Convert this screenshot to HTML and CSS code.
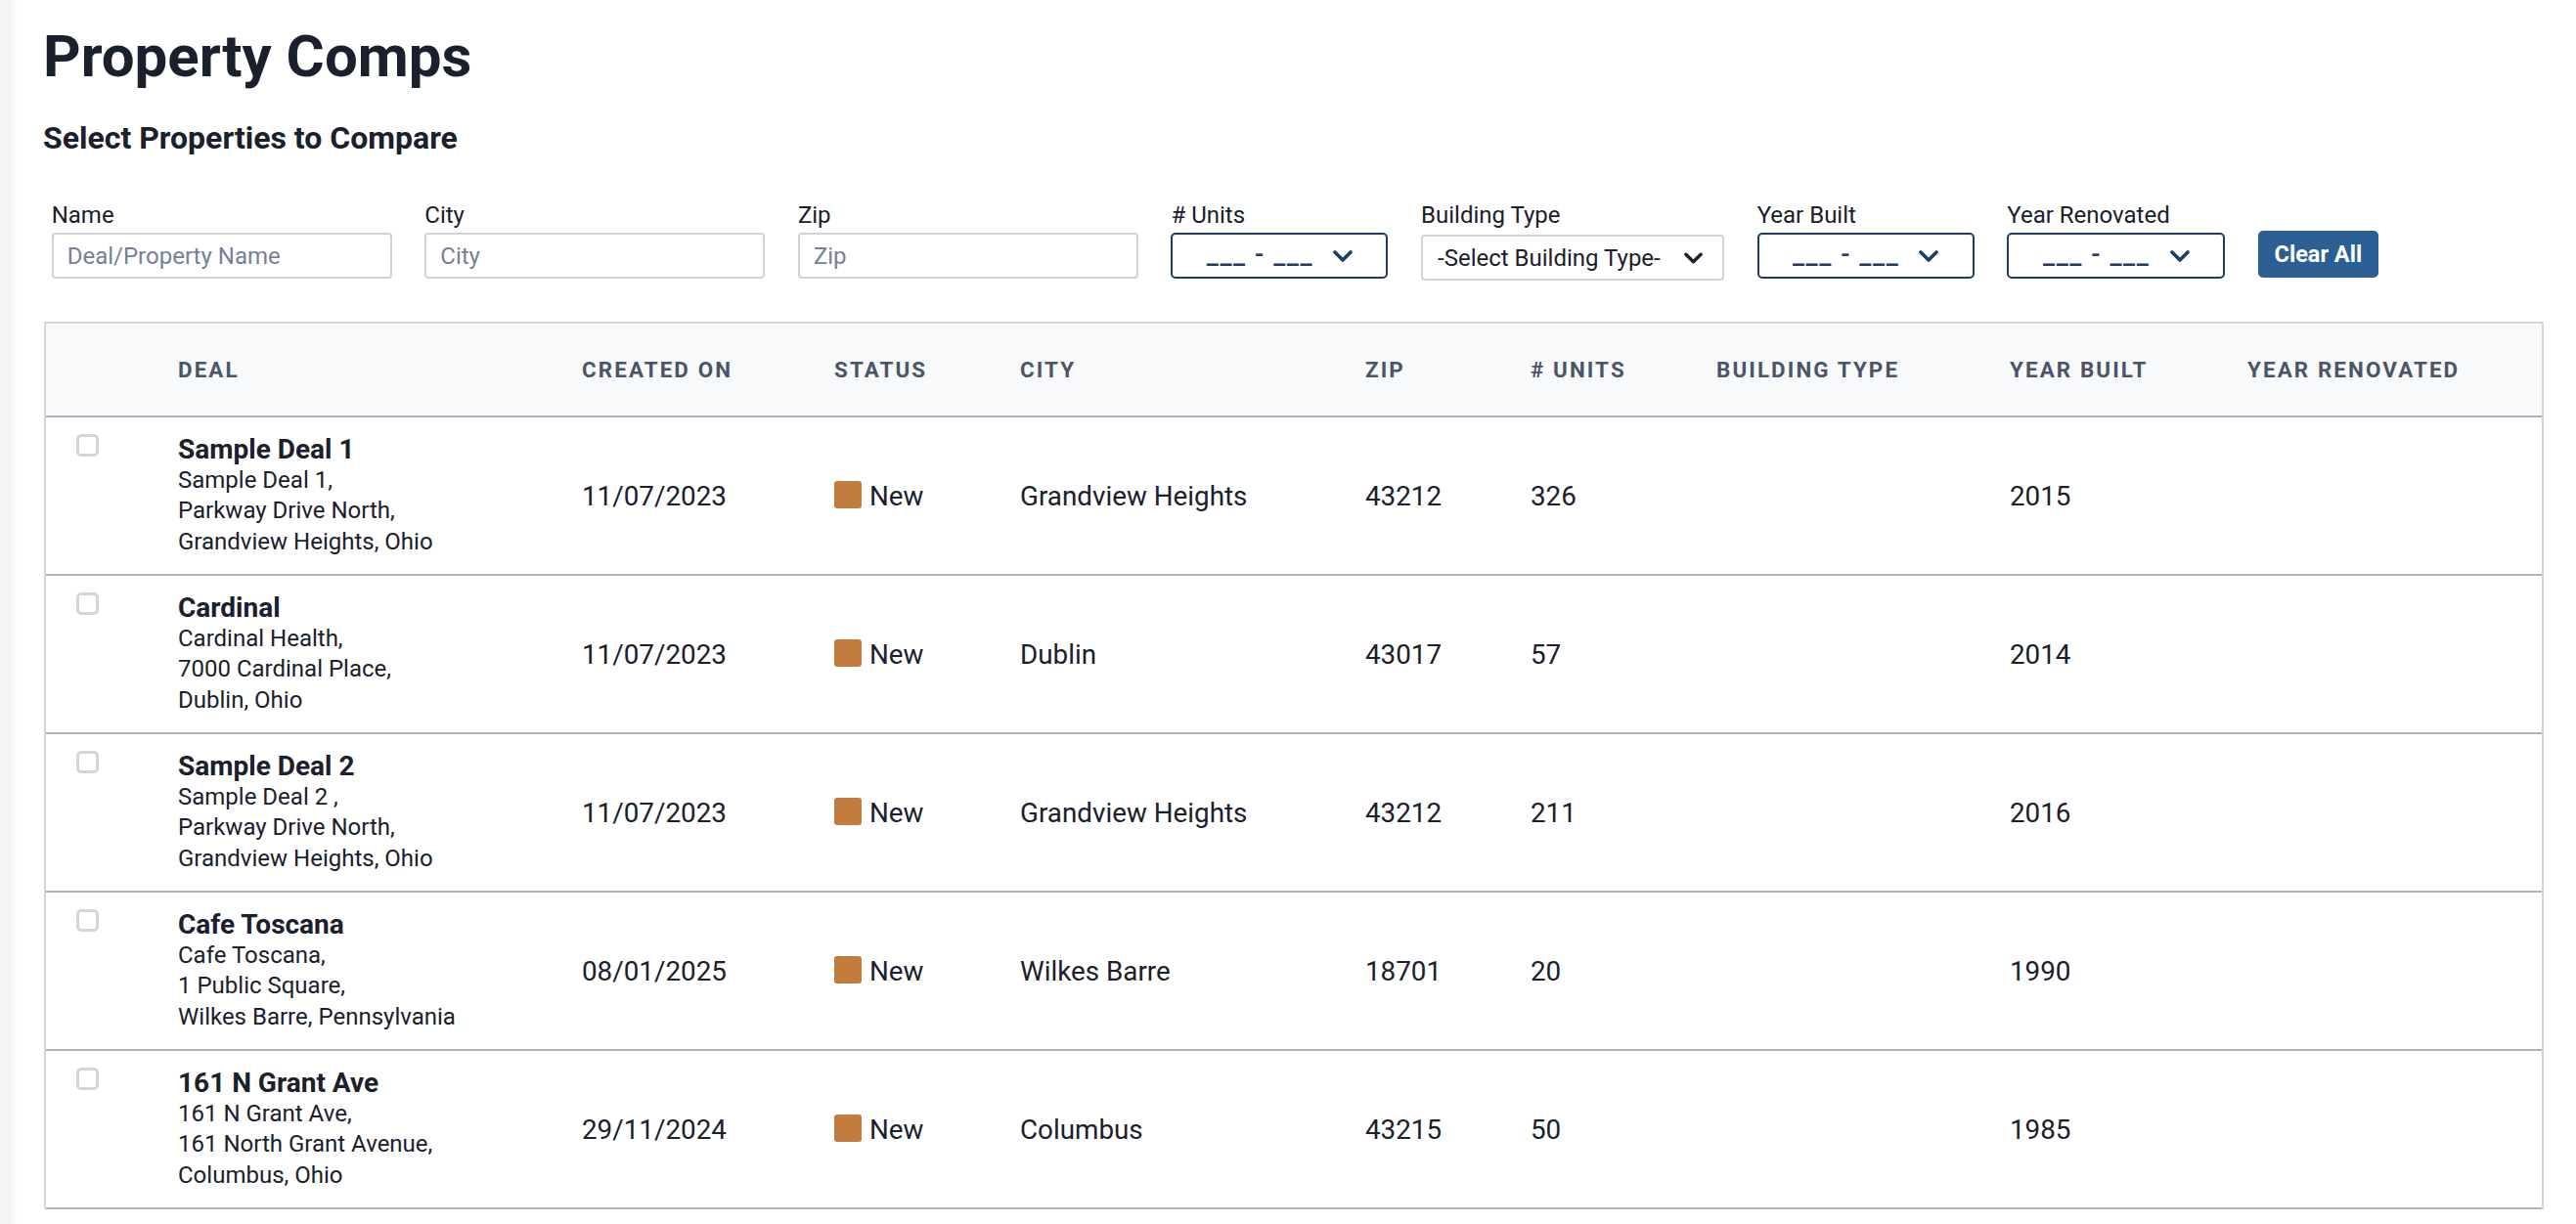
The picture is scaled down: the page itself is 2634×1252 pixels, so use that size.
FILE: index.html
```html
<!DOCTYPE html>
<html lang="en">
<head>
<meta charset="utf-8">
<title>Property Comps</title>
<link rel="stylesheet" href="styles.css">
</head>
<body>
<main class="page">
  <h1 class="title">Property Comps</h1>
  <h2 class="subtitle">Select Properties to Compare</h2>

  <div class="filters">
    <label class="field w-text">
      <span class="field-label">Name</span>
      <input class="text-input" type="text" placeholder="Deal/Property Name">
    </label>
    <label class="field w-text">
      <span class="field-label">City</span>
      <input class="text-input" type="text" placeholder="City">
    </label>
    <label class="field w-text">
      <span class="field-label">Zip</span>
      <input class="text-input" type="text" placeholder="Zip">
    </label>
    <div class="field w-range">
      <span class="field-label"># Units</span>
      <div class="range-select">
        <span class="range-text">___ - ___</span>
        <svg class="chev" viewBox="0 0 20 12" width="20" height="12"><polyline points="2,2 10,10 18,2"/></svg>
      </div>
    </div>
    <div class="field w-type">
      <span class="field-label">Building Type</span>
      <div class="type-select">
        <span>-Select Building Type-</span>
        <svg class="chev dark" viewBox="0 0 20 12" width="19" height="12"><polyline points="2,2 10,10 18,2"/></svg>
      </div>
    </div>
    <div class="field w-range">
      <span class="field-label">Year Built</span>
      <div class="range-select">
        <span class="range-text">___ - ___</span>
        <svg class="chev" viewBox="0 0 20 12" width="20" height="12"><polyline points="2,2 10,10 18,2"/></svg>
      </div>
    </div>
    <div class="field w-range2">
      <span class="field-label">Year Renovated</span>
      <div class="range-select">
        <span class="range-text">___ - ___</span>
        <svg class="chev" viewBox="0 0 20 12" width="20" height="12"><polyline points="2,2 10,10 18,2"/></svg>
      </div>
    </div>
    <button class="clear-btn" type="button">Clear All</button>
  </div>

  <table class="comps">
    <colgroup>
      <col class="c-cb"><col class="c-deal"><col class="c-created"><col class="c-status"><col class="c-city"><col class="c-zip"><col class="c-units"><col class="c-type"><col class="c-built"><col class="c-reno">
    </colgroup>
    <thead>
      <tr>
        <th></th><th>Deal</th><th>Created On</th><th>Status</th><th>City</th><th>Zip</th><th># Units</th><th>Building Type</th><th>Year Built</th><th>Year Renovated</th>
      </tr>
    </thead>
    <tbody>
      <tr>
        <td class="cb-cell"><input class="cb" type="checkbox"></td>
        <td class="deal-cell"><div class="deal-name">Sample Deal 1</div><div class="deal-addr">Sample Deal 1,<br>Parkway Drive North,<br>Grandview Heights, Ohio</div></td>
        <td>11/07/2023</td>
        <td><span class="dot"></span><span class="status-text">New</span></td>
        <td>Grandview Heights</td><td>43212</td><td>326</td><td></td><td>2015</td><td></td>
      </tr>
      <tr>
        <td class="cb-cell"><input class="cb" type="checkbox"></td>
        <td class="deal-cell"><div class="deal-name">Cardinal</div><div class="deal-addr">Cardinal Health,<br>7000 Cardinal Place,<br>Dublin, Ohio</div></td>
        <td>11/07/2023</td>
        <td><span class="dot"></span><span class="status-text">New</span></td>
        <td>Dublin</td><td>43017</td><td>57</td><td></td><td>2014</td><td></td>
      </tr>
      <tr>
        <td class="cb-cell"><input class="cb" type="checkbox"></td>
        <td class="deal-cell"><div class="deal-name">Sample Deal 2</div><div class="deal-addr">Sample Deal 2 ,<br>Parkway Drive North,<br>Grandview Heights, Ohio</div></td>
        <td>11/07/2023</td>
        <td><span class="dot"></span><span class="status-text">New</span></td>
        <td>Grandview Heights</td><td>43212</td><td>211</td><td></td><td>2016</td><td></td>
      </tr>
      <tr>
        <td class="cb-cell"><input class="cb" type="checkbox"></td>
        <td class="deal-cell"><div class="deal-name">Cafe Toscana</div><div class="deal-addr">Cafe Toscana,<br>1 Public Square,<br>Wilkes Barre, Pennsylvania</div></td>
        <td>08/01/2025</td>
        <td><span class="dot"></span><span class="status-text">New</span></td>
        <td>Wilkes Barre</td><td>18701</td><td>20</td><td></td><td>1990</td><td></td>
      </tr>
      <tr>
        <td class="cb-cell"><input class="cb" type="checkbox"></td>
        <td class="deal-cell"><div class="deal-name">161 N Grant Ave</div><div class="deal-addr">161 N Grant Ave,<br>161 North Grant Avenue,<br>Columbus, Ohio</div></td>
        <td>29/11/2024</td>
        <td><span class="dot"></span><span class="status-text">New</span></td>
        <td>Columbus</td><td>43215</td><td>50</td><td></td><td>1985</td><td></td>
      </tr>
    </tbody>
  </table>
</main>
</body>
</html>
```

FILE: styles.css
```css
* { box-sizing: border-box; }

html, body {
  margin: 0;
  padding: 0;
}

body {
  font-family: Roboto, "Liberation Sans", Arial, sans-serif;
  color: #1a202c;
  background: linear-gradient(to right, #f3f4f6 0, #f3f4f6 10px, #ffffff 18px);
  min-height: 1252px;
}

.page {
  padding: 22px 33px 0 44px;
}

.title {
  margin: 0;
  font-size: 60px;
  line-height: 72px;
  font-weight: 700;
  color: #1a202c;
}

.subtitle {
  margin: 27px 0 0;
  font-size: 32px;
  line-height: 40px;
  font-weight: 700;
  color: #1a202c;
}

.filters {
  display: flex;
  align-items: flex-end;
  gap: 33.6px;
  margin: 45px 0 0 8.7px;
}

.field {
  display: flex;
  flex-direction: column;
  gap: 4px;
}

.w-text { width: 348px; }
.w-range { width: 222px; }
.w-range2 { width: 223px; }
.w-type { width: 310px; gap: 6px; }

.field-label {
  font-size: 24px;
  line-height: 28px;
  color: #1a202c;
}

.text-input {
  height: 47px;
  width: 100%;
  border: 2px solid #d0d2d9;
  border-radius: 4px;
  padding: 0 14px;
  font-family: inherit;
  font-size: 24px;
  color: #1a202c;
  background: #fff;
  outline: none;
}

.text-input::placeholder {
  color: #74809a;
}

.range-select {
  height: 47px;
  border: 2px solid #1f3d64;
  border-radius: 5px;
  display: flex;
  align-items: center;
  justify-content: center;
  gap: 20px;
  color: #1f3d64;
  background: #fff;
}

.range-text {
  font-size: 27px;
  font-weight: 500;
  letter-spacing: 1.6px;
  line-height: 30px;
  margin-top: -3px;
}

.type-select {
  height: 47px;
  margin-bottom: -2px;
  border: 2px solid #d0d2d9;
  border-radius: 4px;
  display: flex;
  align-items: center;
  justify-content: space-between;
  padding: 0 20px 0 15px;
  font-size: 24px;
  color: #1a202c;
  background: #fff;
}

.chev {
  display: block;
  flex: none;
}

.chev polyline {
  fill: none;
  stroke: #1f3d64;
  stroke-width: 3.6;
  stroke-linecap: round;
  stroke-linejoin: round;
}

.chev.dark polyline {
  stroke: #1a202c;
}

.clear-btn {
  width: 123px;
  height: 47.5px;
  margin-bottom: 1.5px;
  border: none;
  border-radius: 5px;
  background: #2c5f93;
  color: #ffffff;
  font-family: inherit;
  font-size: 23.5px;
  font-weight: 700;
  padding: 0;
}

/* Table */
.comps {
  margin-top: 44px;
  margin-left: 1px;
  width: 2556px;
  table-layout: fixed;
  border-collapse: separate;
  border-spacing: 0;
  border: 2px solid #d3d5da;
  border-bottom: none;
}

.c-cb { width: 135px; }
.c-deal { width: 413px; }
.c-created { width: 258px; }
.c-status { width: 190px; }
.c-city { width: 353px; }
.c-zip { width: 169px; }
.c-units { width: 190px; }
.c-type { width: 300px; }
.c-built { width: 243px; }
.c-reno { width: 301px; }

.comps thead th {
  height: 96px;
  background: #f8f9fb;
  border-bottom: 2px solid #aeb0bc;
  text-align: left;
  padding: 0;
  font-size: 22.4px;
  font-weight: 700;
  letter-spacing: 2.1px;
  text-transform: uppercase;
  color: #4a5568;
  vertical-align: middle;
}

.comps tbody td {
  padding: 17px 0;
  border-bottom: 2px solid #b0b2bd;
  font-size: 27.8px;
  color: #1a202c;
  vertical-align: middle;
  white-space: nowrap;
}

.comps tbody td.cb-cell {
  vertical-align: top;
  padding-left: 31px;
}

.cb {
  appearance: none;
  -webkit-appearance: none;
  display: block;
  width: 23px;
  height: 23px;
  margin: 0;
  border: 3px solid #d3d5db;
  border-radius: 5px;
  background: #fff;
}

.deal-name {
  font-size: 28px;
  line-height: 31.5px;
  font-weight: 700;
  color: #1a202c;
}

.deal-addr {
  font-size: 24px;
  line-height: 31.5px;
  color: #1a202c;
}

.dot {
  display: inline-block;
  width: 28px;
  height: 28px;
  margin-right: 8px;
  border-radius: 3px;
  background: #c27c3e;
  vertical-align: -3px;
}
```
